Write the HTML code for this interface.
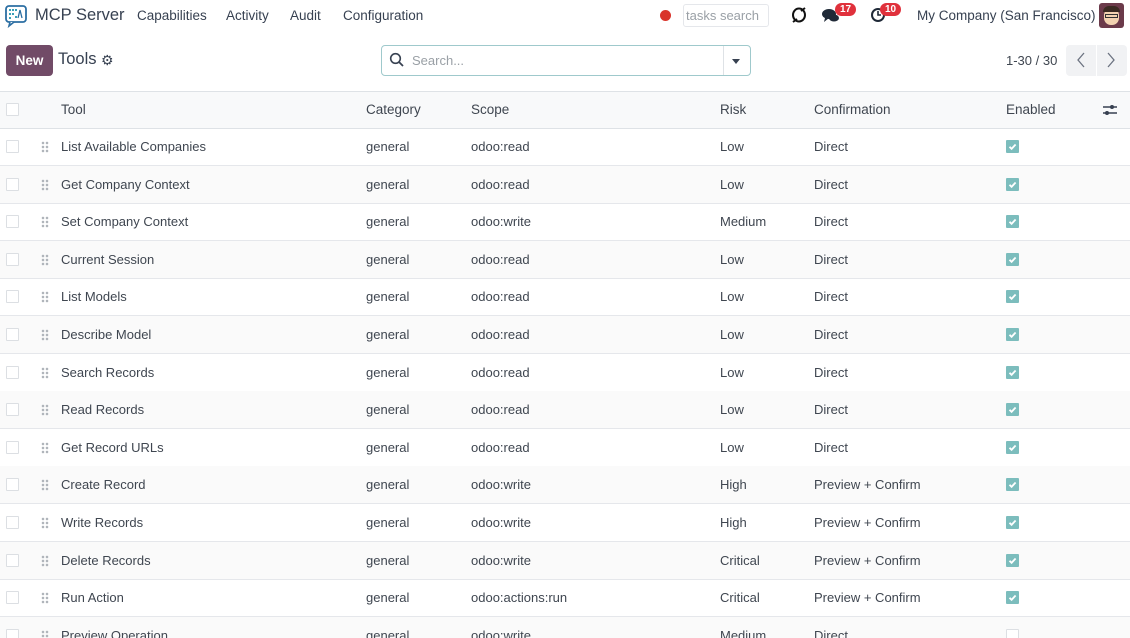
<!DOCTYPE html>
<html><head><meta charset="utf-8"><style>
*{box-sizing:border-box;margin:0;padding:0}
html{overflow:hidden;height:638px}
body{width:1130px;height:638px;overflow:hidden;background:#fff;font-family:"Liberation Sans",sans-serif;color:#3f4650;font-size:13px;position:relative}
.a{position:absolute;white-space:nowrap}
.nav{font-size:13.5px;color:#374151;top:8px}
.row{position:absolute;left:0;width:1130px;height:38px;border-bottom:1px solid #e5e7eb}
.row .a{top:11px}
.cb{position:absolute;width:13px;height:13px;border:1px solid #dcdfe3;background:#fff;border-radius:1px}
.en{position:absolute;left:1006px;top:12px;width:13px;height:13px;background:#7cbdbd;border-radius:1px}
.drag{position:absolute;left:41px;top:13px;width:8px;height:12px;background:radial-gradient(circle,#b0b5bb 1.2px,transparent 1.4px) 0 0/4px 4px}
</style></head><body>
<svg class="a" style="left:4px;top:4px" width="24" height="24" viewBox="0 0 24 24"><rect x="2" y="2" width="20" height="16" rx="3" fill="#fff" stroke="#2c6fa3" stroke-width="1.8"/><path d="M6 18 L5 22 L10 18" fill="#fff" stroke="#2c6fa3" stroke-width="1.6"/><g fill="#3aa0b8"><rect x="5" y="5" width="2" height="2"/><rect x="8" y="5" width="2" height="2"/><rect x="11" y="5" width="2" height="2"/><rect x="5" y="9" width="2" height="2"/><rect x="8" y="9" width="2" height="2"/><rect x="5" y="13" width="2" height="2"/><rect x="11" y="12" width="2" height="2"/><path d="M14 14 L16 6 L18 14" stroke="#2c6fa3" fill="none" stroke-width="1.3"/></g></svg>
<div class="a" style="left:35px;top:6px;font-size:16.5px;color:#374151">MCP Server</div>
<div class="a nav" style="left:137px">Capabilities</div>
<div class="a nav" style="left:226px">Activity</div>
<div class="a nav" style="left:290px">Audit</div>
<div class="a nav" style="left:343px">Configuration</div>
<div class="a" style="left:660px;top:10px;width:11px;height:11px;border-radius:50%;background:#d9342b"></div>
<div class="a" style="left:683px;top:4px;width:86px;height:23px;border:1px solid #e5e7eb;border-radius:3px;color:#9aa0a6;font-size:13px;padding:3px 2px">tasks search</div>
<svg class="a" style="left:790px;top:6px" width="18" height="18" viewBox="0 0 18 18"><ellipse cx="9" cy="9" rx="6" ry="6.5" fill="none" stroke="#111" stroke-width="2"/><path d="M3 16 L7 13 M15 2 L11 5" stroke="#111" stroke-width="2"/></svg>
<svg class="a" style="left:821px;top:8px" width="20" height="16" viewBox="0 0 20 16"><ellipse cx="8" cy="6" rx="7" ry="5" fill="#1f2937"/><path d="M4 10 L3 14 L8 10Z" fill="#1f2937"/><ellipse cx="13" cy="10" rx="5" ry="3.5" fill="#1f2937"/></svg>
<div class="a" style="left:835px;top:3px;background:#e0313c;color:#fff;font-size:10px;font-weight:bold;border-radius:8px;padding:1px 5px">17</div>
<svg class="a" style="left:870px;top:7px" width="16" height="16" viewBox="0 0 16 16"><circle cx="8" cy="8" r="6" fill="none" stroke="#1f2937" stroke-width="2"/><path d="M8 4 V8 H11" stroke="#1f2937" stroke-width="1.6" fill="none"/></svg>
<div class="a" style="left:880px;top:3px;background:#e0313c;color:#fff;font-size:10px;font-weight:bold;border-radius:8px;padding:1px 5px">10</div>
<div class="a nav" style="left:917px">My Company (San Francisco)</div>
<div class="a" style="left:1099px;top:3px;width:25px;height:25px;border-radius:3px;background:#6b3a4a"><div style="position:absolute;left:5px;top:6px;width:15px;height:16px;background:#f2d2b0;border-radius:6px 6px 7px 7px"></div><div style="position:absolute;left:4px;top:3px;width:17px;height:6px;background:#3a2a22;border-radius:6px 6px 0 0"></div><div style="position:absolute;left:6px;top:11px;width:13px;height:4px;border:1px solid #333"></div></div>

<div class="a" style="left:6px;top:45px;width:47px;height:31px;background:#714b67;border-radius:4px;color:#fff;font-weight:bold;font-size:13.5px;text-align:center;line-height:31px">New</div>
<div class="a" style="left:58px;top:50px;font-size:16.5px;color:#374151">Tools</div>
<div class="a" style="left:101px;top:52px;font-size:14px;color:#374151">⚙</div>
<div class="a" style="left:381px;top:45px;width:370px;height:31px;border:1px solid #9fc9cc;border-radius:4px"></div>
<svg class="a" style="left:389px;top:52px" width="16" height="16" viewBox="0 0 16 16"><circle cx="6.5" cy="6.5" r="4.8" fill="none" stroke="#374151" stroke-width="1.6"/><path d="M10 10 L14 14" stroke="#374151" stroke-width="1.8"/></svg>
<div class="a" style="left:412px;top:53px;color:#9aa0a6;font-size:13px">Search...</div>
<div class="a" style="left:723px;top:46px;width:1px;height:29px;background:#dee2e6"></div>
<div class="a" style="left:732px;top:59px;width:0;height:0;border-left:4.5px solid transparent;border-right:4.5px solid transparent;border-top:5px solid #374151"></div>
<div class="a" style="left:1006px;top:53px;font-size:13px">1-30 / 30</div>
<div class="a" style="left:1066px;top:45px;width:61px;height:31px;background:#f1f2f4;border-radius:4px"></div>
<div class="a" style="left:1096px;top:45px;width:1px;height:31px;background:#fff"></div>
<svg class="a" style="left:1075px;top:52px" width="12" height="16" viewBox="0 0 12 16"><path d="M9 1 L3 8 L9 15" stroke="#6b7280" stroke-width="1.3" fill="none"/></svg>
<svg class="a" style="left:1105px;top:52px" width="12" height="16" viewBox="0 0 12 16"><path d="M3 1 L9 8 L3 15" stroke="#6b7280" stroke-width="1.3" fill="none"/></svg>

<div class="a" style="left:0;top:91px;width:1130px;height:38px;background:#f8f9fa;border-top:1px solid #dee2e6;border-bottom:1px solid #dee2e6"></div>
<div class="cb" style="left:6px;top:103px"></div>
<div class="a" style="left:61px;top:102px;font-size:13.5px">Tool</div>
<div class="a" style="left:366px;top:102px;font-size:13.5px">Category</div>
<div class="a" style="left:471px;top:102px;font-size:13.5px">Scope</div>
<div class="a" style="left:720px;top:102px;font-size:13.5px">Risk</div>
<div class="a" style="left:814px;top:102px;font-size:13.5px">Confirmation</div>
<div class="a" style="left:1006px;top:102px;font-size:13.5px">Enabled</div>
<svg class="a" style="left:1102px;top:103px" width="16" height="14" viewBox="0 0 16 14"><path d="M1 4 H15 M1 10 H15" stroke="#374151" stroke-width="1.4"/><circle cx="10" cy="4" r="2" fill="#374151"/><circle cx="5" cy="10" r="2" fill="#374151"/></svg>

<div class="row" style="top:128px"><div class="cb" style="left:6px;top:12px"></div><div class="drag"></div><div class="a" style="left:61px">List Available Companies</div><div class="a" style="left:366px">general</div><div class="a" style="left:471px">odoo:read</div><div class="a" style="left:720px">Low</div><div class="a" style="left:814px">Direct</div><div class="en"><svg width="13" height="13"><path d="M3.5 6.8 L5.6 8.8 L9.6 4.5" stroke="#fff" stroke-width="1.8" fill="none"/></svg></div></div>
<div class="row" style="top:165.6px;background:#fafafa"><div class="cb" style="left:6px;top:12px"></div><div class="drag"></div><div class="a" style="left:61px">Get Company Context</div><div class="a" style="left:366px">general</div><div class="a" style="left:471px">odoo:read</div><div class="a" style="left:720px">Low</div><div class="a" style="left:814px">Direct</div><div class="en"><svg width="13" height="13"><path d="M3.5 6.8 L5.6 8.8 L9.6 4.5" stroke="#fff" stroke-width="1.8" fill="none"/></svg></div></div>
<div class="row" style="top:203.2px"><div class="cb" style="left:6px;top:12px"></div><div class="drag"></div><div class="a" style="left:61px">Set Company Context</div><div class="a" style="left:366px">general</div><div class="a" style="left:471px">odoo:write</div><div class="a" style="left:720px">Medium</div><div class="a" style="left:814px">Direct</div><div class="en"><svg width="13" height="13"><path d="M3.5 6.8 L5.6 8.8 L9.6 4.5" stroke="#fff" stroke-width="1.8" fill="none"/></svg></div></div>
<div class="row" style="top:240.8px;background:#fafafa"><div class="cb" style="left:6px;top:12px"></div><div class="drag"></div><div class="a" style="left:61px">Current Session</div><div class="a" style="left:366px">general</div><div class="a" style="left:471px">odoo:read</div><div class="a" style="left:720px">Low</div><div class="a" style="left:814px">Direct</div><div class="en"><svg width="13" height="13"><path d="M3.5 6.8 L5.6 8.8 L9.6 4.5" stroke="#fff" stroke-width="1.8" fill="none"/></svg></div></div>
<div class="row" style="top:278.4px"><div class="cb" style="left:6px;top:12px"></div><div class="drag"></div><div class="a" style="left:61px">List Models</div><div class="a" style="left:366px">general</div><div class="a" style="left:471px">odoo:read</div><div class="a" style="left:720px">Low</div><div class="a" style="left:814px">Direct</div><div class="en"><svg width="13" height="13"><path d="M3.5 6.8 L5.6 8.8 L9.6 4.5" stroke="#fff" stroke-width="1.8" fill="none"/></svg></div></div>
<div class="row" style="top:316px;background:#fafafa"><div class="cb" style="left:6px;top:12px"></div><div class="drag"></div><div class="a" style="left:61px">Describe Model</div><div class="a" style="left:366px">general</div><div class="a" style="left:471px">odoo:read</div><div class="a" style="left:720px">Low</div><div class="a" style="left:814px">Direct</div><div class="en"><svg width="13" height="13"><path d="M3.5 6.8 L5.6 8.8 L9.6 4.5" stroke="#fff" stroke-width="1.8" fill="none"/></svg></div></div>
<div class="row" style="top:353.6px"><div class="cb" style="left:6px;top:12px"></div><div class="drag"></div><div class="a" style="left:61px">Search Records</div><div class="a" style="left:366px">general</div><div class="a" style="left:471px">odoo:read</div><div class="a" style="left:720px">Low</div><div class="a" style="left:814px">Direct</div><div class="en"><svg width="13" height="13"><path d="M3.5 6.8 L5.6 8.8 L9.6 4.5" stroke="#fff" stroke-width="1.8" fill="none"/></svg></div></div>
<div class="row" style="top:391.2px;background:#fafafa"><div class="cb" style="left:6px;top:12px"></div><div class="drag"></div><div class="a" style="left:61px">Read Records</div><div class="a" style="left:366px">general</div><div class="a" style="left:471px">odoo:read</div><div class="a" style="left:720px">Low</div><div class="a" style="left:814px">Direct</div><div class="en"><svg width="13" height="13"><path d="M3.5 6.8 L5.6 8.8 L9.6 4.5" stroke="#fff" stroke-width="1.8" fill="none"/></svg></div></div>
<div class="row" style="top:428.8px"><div class="cb" style="left:6px;top:12px"></div><div class="drag"></div><div class="a" style="left:61px">Get Record URLs</div><div class="a" style="left:366px">general</div><div class="a" style="left:471px">odoo:read</div><div class="a" style="left:720px">Low</div><div class="a" style="left:814px">Direct</div><div class="en"><svg width="13" height="13"><path d="M3.5 6.8 L5.6 8.8 L9.6 4.5" stroke="#fff" stroke-width="1.8" fill="none"/></svg></div></div>
<div class="row" style="top:466.4px;background:#fafafa"><div class="cb" style="left:6px;top:12px"></div><div class="drag"></div><div class="a" style="left:61px">Create Record</div><div class="a" style="left:366px">general</div><div class="a" style="left:471px">odoo:write</div><div class="a" style="left:720px">High</div><div class="a" style="left:814px">Preview + Confirm</div><div class="en"><svg width="13" height="13"><path d="M3.5 6.8 L5.6 8.8 L9.6 4.5" stroke="#fff" stroke-width="1.8" fill="none"/></svg></div></div>
<div class="row" style="top:504px"><div class="cb" style="left:6px;top:12px"></div><div class="drag"></div><div class="a" style="left:61px">Write Records</div><div class="a" style="left:366px">general</div><div class="a" style="left:471px">odoo:write</div><div class="a" style="left:720px">High</div><div class="a" style="left:814px">Preview + Confirm</div><div class="en"><svg width="13" height="13"><path d="M3.5 6.8 L5.6 8.8 L9.6 4.5" stroke="#fff" stroke-width="1.8" fill="none"/></svg></div></div>
<div class="row" style="top:541.6px;background:#fafafa"><div class="cb" style="left:6px;top:12px"></div><div class="drag"></div><div class="a" style="left:61px">Delete Records</div><div class="a" style="left:366px">general</div><div class="a" style="left:471px">odoo:write</div><div class="a" style="left:720px">Critical</div><div class="a" style="left:814px">Preview + Confirm</div><div class="en"><svg width="13" height="13"><path d="M3.5 6.8 L5.6 8.8 L9.6 4.5" stroke="#fff" stroke-width="1.8" fill="none"/></svg></div></div>
<div class="row" style="top:579.2px"><div class="cb" style="left:6px;top:12px"></div><div class="drag"></div><div class="a" style="left:61px">Run Action</div><div class="a" style="left:366px">general</div><div class="a" style="left:471px">odoo:actions:run</div><div class="a" style="left:720px">Critical</div><div class="a" style="left:814px">Preview + Confirm</div><div class="en"><svg width="13" height="13"><path d="M3.5 6.8 L5.6 8.8 L9.6 4.5" stroke="#fff" stroke-width="1.8" fill="none"/></svg></div></div>
<div class="row" style="top:616.8px;background:#fafafa"><div class="cb" style="left:6px;top:12px"></div><div class="drag"></div><div class="a" style="left:61px">Preview Operation</div><div class="a" style="left:366px">general</div><div class="a" style="left:471px">odoo:write</div><div class="a" style="left:720px">Medium</div><div class="a" style="left:814px">Direct</div><div class="cb" style="left:1006px;top:12px"></div></div>
</body></html>
